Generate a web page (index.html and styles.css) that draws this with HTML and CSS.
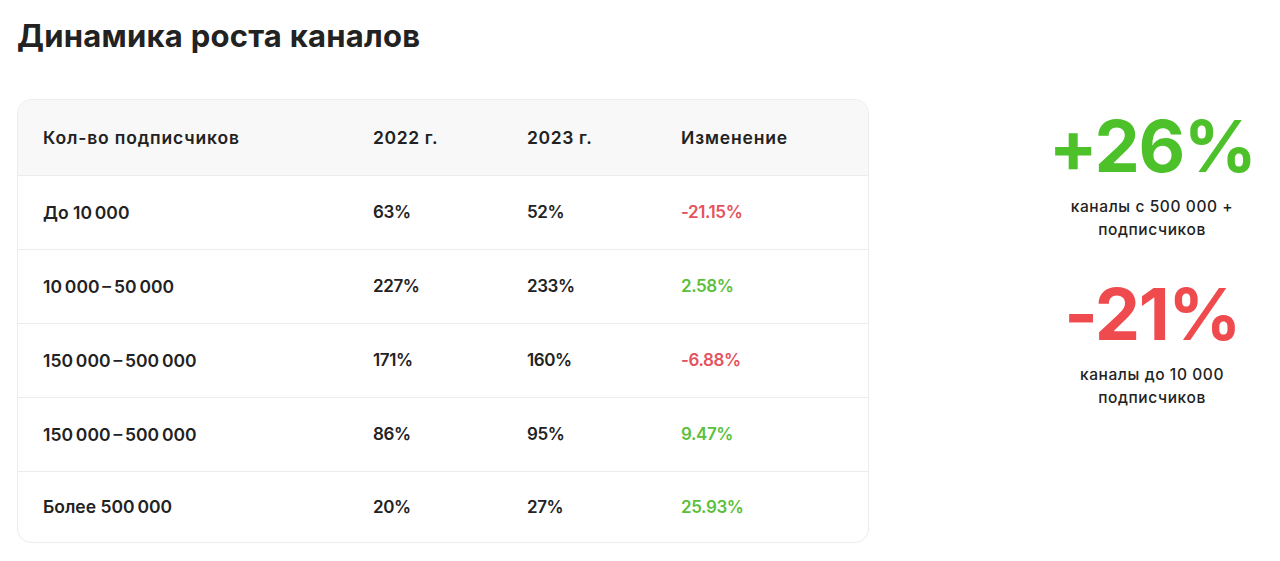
FILE: index.html
```html
<!DOCTYPE html>
<html lang="ru">
<head>
<meta charset="utf-8">
<title>Динамика роста каналов</title>
<link rel="stylesheet" href="styles.css">
</head>
<body>
<h1 class="title">Динамика роста каналов</h1>
<div class="content">
  <div class="card">
    <table class="tbl">
      <thead>
        <tr><th>Кол-во подписчиков</th><th class="num">2022 г.</th><th class="num">2023 г.</th><th>Изменение</th></tr>
      </thead>
      <tbody>
        <tr><td>До 10&#8239;000</td><td class="num">63%</td><td class="num">52%</td><td class="num neg">-21.15%</td></tr>
        <tr><td>10&#8239;000&thinsp;–&thinsp;50&#8239;000</td><td class="num">227%</td><td class="num">233%</td><td class="num pos">2.58%</td></tr>
        <tr><td>150&#8239;000&thinsp;–&thinsp;500&#8239;000</td><td class="num">171%</td><td class="num">160%</td><td class="num neg">-6.88%</td></tr>
        <tr><td>150&#8239;000&thinsp;–&thinsp;500&#8239;000</td><td class="num">86%</td><td class="num">95%</td><td class="num pos">9.47%</td></tr>
        <tr class="last"><td>Более 500&#8239;000</td><td class="num">20%</td><td class="num">27%</td><td class="num pos">25.93%</td></tr>
      </tbody>
    </table>
  </div>
  <div class="stats">
    <div class="stat">
      <div class="big big-pos">+26%</div>
      <div class="cap">каналы с 500 000 +<br>подписчиков</div>
    </div>
    <div class="stat">
      <div class="big big-neg">-21%</div>
      <div class="cap">каналы до 10 000<br>подписчиков</div>
    </div>
  </div>
</div>
</body>
</html>
```
FILE: styles.css
```css
* { box-sizing: border-box; }
html, body { margin: 0; padding: 0; background: #fff; }
body {
  font-family: Inter, "Noto Sans", sans-serif;
  color: #222;
  padding: 0 13px 0 17px;
}
.title {
  margin: 0;
  padding-top: 14px;
  font-size: 31px;
  line-height: 44px;
  font-weight: 700;
  letter-spacing: 0.25px;
  color: #222;
}
.content {
  display: flex;
  margin-top: 41px;
}
.card {
  width: 852px;
  flex: none;
  border: 1px solid #ececec;
  border-radius: 14px;
  overflow: hidden;
}
.tbl {
  width: 100%;
  border-collapse: collapse;
  font-size: 17.5px;
  font-weight: 600;
  letter-spacing: 0;
}
.tbl th, .tbl td {
  text-align: left;
  padding: 0 0 0 25px;
  height: 74px;
}
.tbl th {
  height: 75px;
  background: #f8f8f8;
  font-weight: 600;
  letter-spacing: 0.85px;
}
.tbl th.num { letter-spacing: 0.6px; }
.tbl td.num { font-size: 17px; letter-spacing: -0.4px; }
.tbl th:nth-child(1) { width: 330px; }
.tbl th:nth-child(2), .tbl th:nth-child(3) { width: 154px; }
.tbl tr { border-bottom: 1px solid #ececec; }
.tbl tr.last { border-bottom: none; }
.tbl tr.last td { height: 71px; }
.neg { color: #e5525c; }
.pos { color: #5cbf3c; }
.stats {
  margin-left: auto;
  width: 230px;
  display: flex;
  flex-direction: column;
  align-items: center;
  padding-top: 8px;
}
.stat { display: flex; flex-direction: column; align-items: center; }
.stat + .stat { margin-top: 34px; }
.big {
  font-size: 72px;
  line-height: 78px;
  font-weight: 700;
  letter-spacing: -1.5px;
}
.big-pos { color: #4dc12a; }
.big-neg { color: #ef4b4f; }
.cap {
  margin-top: 10px;
  font-size: 15.5px;
  line-height: 23px;
  font-weight: 500;
  letter-spacing: 0.6px;
  text-align: center;
  color: #222;
}
```
